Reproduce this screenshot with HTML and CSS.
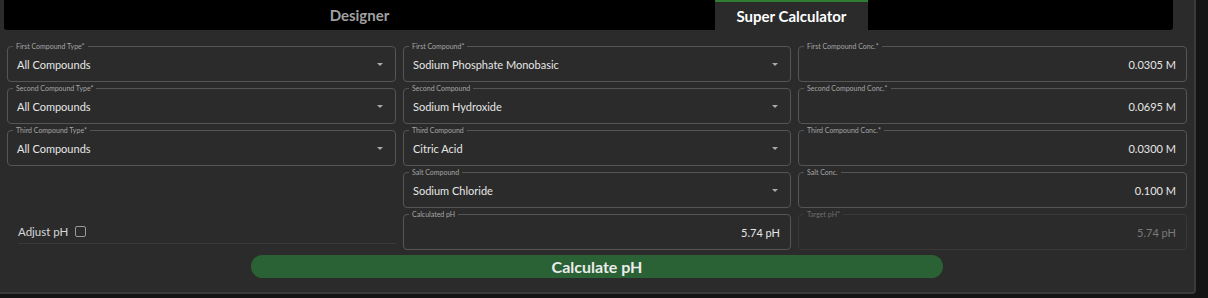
FILE: index.html
```html
<!DOCTYPE html>
<html lang="en">
<head>
<meta charset="UTF-8">
<title>Super Calculator</title>
<link rel="stylesheet" href="styles.css">
</head>
<body>

<div class="panel">
    <div class="tabs">
        <div class="tab">Designer</div>
        <div class="tab selected">Super Calculator</div>
        <div class="tab-fill"></div>
    </div>

    <div class="form">
        <div class="field select">
            <label>First Compound Type*</label>
            <span class="value">All Compounds</span>
            <span class="arrow"></span>
        </div>
        <div class="field select">
            <label>First Compound*</label>
            <span class="value">Sodium Phosphate Monobasic</span>
            <span class="arrow"></span>
        </div>
        <div class="field number">
            <label>First Compound Conc.*</label>
            <span class="value">0.0305 M</span>
        </div>

        <div class="field select">
            <label>Second Compound Type*</label>
            <span class="value">All Compounds</span>
            <span class="arrow"></span>
        </div>
        <div class="field select">
            <label>Second Compound</label>
            <span class="value">Sodium Hydroxide</span>
            <span class="arrow"></span>
        </div>
        <div class="field number">
            <label>Second Compound Conc.*</label>
            <span class="value">0.0695 M</span>
        </div>

        <div class="field select">
            <label>Third Compound Type*</label>
            <span class="value">All Compounds</span>
            <span class="arrow"></span>
        </div>
        <div class="field select">
            <label>Third Compound</label>
            <span class="value">Citric Acid</span>
            <span class="arrow"></span>
        </div>
        <div class="field number">
            <label>Third Compound Conc.*</label>
            <span class="value">0.0300 M</span>
        </div>

        <div class="blank"></div>
        <div class="field select">
            <label>Salt Compound</label>
            <span class="value">Sodium Chloride</span>
            <span class="arrow"></span>
        </div>
        <div class="field number">
            <label>Salt Conc.</label>
            <span class="value">0.100 M</span>
        </div>

        <div class="adjust">
            <span>Adjust pH</span>
            <span class="checkbox"></span>
        </div>
        <div class="field number">
            <label>Calculated pH</label>
            <span class="value">5.74 pH</span>
        </div>
        <div class="field number disabled">
            <label>Target pH*</label>
            <span class="value">5.74 pH</span>
        </div>
    </div>

    <div class="actions">
        <button class="calc">Calculate pH</button>
    </div>
</div>

</body>
</html>
```

FILE: styles.css
```css
body {
    margin: 0;
    background: #141414;
    font-family: Lato, 'Noto Sans', sans-serif;
    color: #e6e6e6;
    overflow: hidden;
}
.panel {
    width: 1196px;
    height: 294px;
    background: #2b2b2b;
    border-right: 2px solid #3a3a3a;
    border-bottom: 2px solid #3a3a3a;
    border-bottom-right-radius: 4px;
    box-sizing: border-box;
}
.tabs {
    display: flex;
    height: 30px;
    margin-left: 4px;
    width: 1169px;
}
.tab {
    width: 711px;
    background: #000;
    color: #a0a0a0;
    font-weight: bold;
    font-size: 15px;
    display: flex;
    justify-content: center;
    align-items: center;
    border-bottom-left-radius: 3px;
}
.tab.selected {
    width: 153px;
    background: #2b2b2b;
    color: #fff;
    border-top: 2px solid #2e7d32;
    border-radius: 0;
    box-sizing: border-box;
}
.tab-fill {
    flex: 1;
    background: #000;
    border-bottom-right-radius: 3px;
}
.form {
    display: grid;
    grid-template-columns: 389px 388px 389px;
    grid-auto-rows: 36px;
    column-gap: 7px;
    row-gap: 6px;
    margin: 16px 0 0 7px;
}
.field {
    position: relative;
    border: 1px solid #555;
    border-radius: 4px;
    display: flex;
    align-items: center;
    padding: 0 10px 0 9px;
    font-size: 11px;
}
.field label {
    position: absolute;
    top: -5px;
    left: 5px;
    padding: 0 3px;
    background: #2b2b2b;
    color: #a6a6a6;
    font-size: 7px;
    line-height: 9px;
}
.select .value {
    flex: 1;
}
.number {
    justify-content: flex-end;
}
.arrow {
    width: 0;
    height: 0;
    margin-right: 2px;
    border-left: 3.5px solid transparent;
    border-right: 3.5px solid transparent;
    border-top: 3.5px solid #aaa;
}
.disabled {
    border-color: #383838;
    color: #7a7a7a;
}
.disabled label {
    color: #6e6e6e;
}
.adjust {
    display: flex;
    align-items: center;
    gap: 7px;
    height: 30px;
    box-sizing: border-box;
    margin-left: 11px;
    padding-top: 6px;
    border-bottom: 1px solid #3a3a3a;
    font-size: 11.5px;
    color: #d8d8d8;
}
.checkbox {
    width: 9px;
    height: 9px;
    border: 1.5px solid #9a9a9a;
    border-radius: 2px;
}
.actions {
    display: flex;
    justify-content: center;
    margin-top: 5px;
}
.calc {
    width: 692px;
    height: 23px;
    border: none;
    border-radius: 12px;
    background: #2a6235;
    color: #ececec;
    font-family: Lato, 'Noto Sans', sans-serif;
    font-size: 16px;
    font-weight: bold;
    padding: 0;
}
```
